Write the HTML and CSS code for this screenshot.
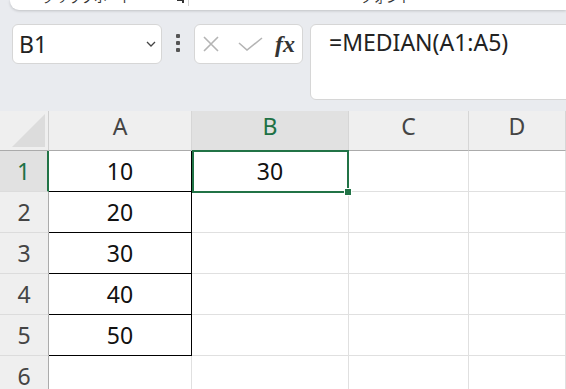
FILE: index.html
```html
<!DOCTYPE html>
<html>
<head>
    <title>MEDIAN</title>
    <meta charset="utf-8">
    <link rel="stylesheet" href="styles.css">
</head>
<body>
    <!-- ribbon, only its bottom edge is visible -->
    <div class="ribbon">
        <span class="group-label clip">クリップボード</span>
        <svg class="launcher" width="10" height="4" viewBox="0 0 10 4"><path d="M2 0 H8 V3" fill="none" stroke="#333" stroke-width="2"/></svg>
        <span class="group-sep"></span>
        <span class="group-label font">フォント</span>
    </div>

    <div class="formula-bar">
        <div class="name-box">
            <span>B1</span>
            <svg width="10" height="6" viewBox="0 0 10 6"><polyline points="1,1 5,5 9,1" fill="none" stroke="#444" stroke-width="1.3"/></svg>
        </div>
        <div class="dots"><i></i><i></i><i></i></div>
        <div class="fx-box">
            <svg class="cancel" width="16" height="16" viewBox="0 0 16 16"><path d="M1 1 L15 15 M15 1 L1 15" stroke="#b4b4b4" stroke-width="1.6"/></svg>
            <svg class="enter" width="25" height="14" viewBox="0 0 25 14"><polyline points="1,6 9,13 24,1" fill="none" stroke="#b4b4b4" stroke-width="1.6"/></svg>
            <span class="fx">fx</span>
        </div>
        <div class="formula">=MEDIAN(A1:A5)</div>
    </div>

    <div class="sheet">
        <div class="cell corner"><svg width="34" height="34" viewBox="0 0 34 34"><polygon points="33,0 33,33 0,33" fill="#dcdcdc"/></svg></div>
        <div class="cell hdr">A</div>
        <div class="cell hdr sel">B</div>
        <div class="cell hdr">C</div>
        <div class="cell hdr">D</div>

        <div class="cell row-hdr sel">1</div>
        <div class="cell boxed">10</div>
        <div class="cell active">30</div>
        <div class="cell"></div>
        <div class="cell"></div>

        <div class="cell row-hdr">2</div>
        <div class="cell boxed">20</div>
        <div class="cell"></div>
        <div class="cell"></div>
        <div class="cell"></div>

        <div class="cell row-hdr">3</div>
        <div class="cell boxed">30</div>
        <div class="cell"></div>
        <div class="cell"></div>
        <div class="cell"></div>

        <div class="cell row-hdr">4</div>
        <div class="cell boxed">40</div>
        <div class="cell"></div>
        <div class="cell"></div>
        <div class="cell"></div>

        <div class="cell row-hdr">5</div>
        <div class="cell boxed">50</div>
        <div class="cell"></div>
        <div class="cell"></div>
        <div class="cell"></div>

        <div class="cell row-hdr">6</div>
        <div class="cell"></div>
        <div class="cell"></div>
        <div class="cell"></div>
        <div class="cell"></div>
    </div>
</body>
</html>
```

FILE: styles.css
```css
body {
    margin: 0;
    height: 389px;
    overflow: hidden;
    background-color: #e9ebef;
    font-family: "Noto Sans", "Noto Sans CJK JP", sans-serif;
}

/* Ribbon (cut off at the top) */
.ribbon {
    margin-left: 10px;
    height: 10px;
    background-color: #fff;
    border-bottom-left-radius: 9px;
    box-shadow: 0 1px 3px rgba(0,0,0,0.18);
    display: flex;
    align-items: flex-start;
    overflow: hidden;
}

.group-label {
    font-family: "Noto Sans CJK JP", sans-serif;
    font-size: 13px;
    line-height: 14px;
    margin-top: -10px;
    color: #333;
}

.group-label.clip {
    margin-left: 32px;
}

.launcher {
    margin-left: 42px;
}

.group-sep {
    width: 1px;
    height: 6px;
    margin-left: 3px;
    background-color: #d0d0d0;
}

.group-label.font {
    margin-left: 171px;
}

/* Formula bar */
.formula-bar {
    display: flex;
    align-items: flex-start;
    padding: 14px 0 11px 12px;
}

.name-box,
.fx-box,
.formula {
    box-sizing: border-box;
    background-color: #fff;
    border: 1px solid #d6d6d6;
    border-radius: 6px;
}

.name-box {
    width: 150px;
    height: 40px;
    display: flex;
    align-items: center;
    justify-content: space-between;
    padding: 0 5px 0 6px;
    font-size: 23px;
    color: #222;
}

.dots {
    width: 32px;
    display: flex;
    flex-direction: column;
    align-items: center;
    gap: 3px;
    padding-top: 10px;
}

.dots i {
    width: 4px;
    height: 4px;
    border-radius: 1px;
    background-color: #555;
}

.fx-box {
    width: 109px;
    height: 40px;
    display: flex;
    align-items: center;
    padding-left: 8px;
}

.enter {
    margin-left: 19px;
}

.fx {
    font-family: "Liberation Serif", serif;
    font-style: italic;
    font-weight: bold;
    font-size: 24px;
    color: #333;
    margin-left: 12px;
}

.formula {
    flex: 1;
    height: 76px;
    margin-left: 7px;
    margin-right: -10px;
    padding: 1px 18px;
    font-size: 23px;
    color: #222;
}

/* Sheet grid */
.sheet {
    display: grid;
    grid-template-columns: 49px 143px 157px 120px 1fr;
    grid-template-rows: 40px;
    grid-auto-rows: 41px;
}

.cell {
    box-sizing: border-box;
    position: relative;
    display: flex;
    align-items: center;
    justify-content: center;
    background-color: #fff;
    border-right: 1px solid #e0e0e0;
    border-bottom: 1px solid #e0e0e0;
    font-size: 23px;
    color: #111;
}

.corner {
    background-color: #efefef;
    border-right-color: #cfcfcf;
    border-bottom-color: #ababab;
    justify-content: flex-end;
    align-items: flex-end;
    padding: 0 2px 2px 0;
}

.hdr {
    background-color: #efefef;
    color: #444;
    border-right-color: #d6d6d6;
    border-bottom-color: #ababab;
    padding-bottom: 10px;
}

.row-hdr {
    background-color: #efefef;
    color: #444;
    border-right-color: #ababab;
    border-bottom-color: #dcdcdc;
}

.hdr.sel {
    background-color: #e1e1e1;
    color: #1e7145;
    border-bottom: 1px solid #217346;
}

.row-hdr.sel {
    background-color: #e1e1e1;
    color: #1e7145;
    border-right: 2px solid #217346;
}

.boxed {
    border-right-color: #000;
    border-bottom-color: #000;
}

/* active cell: selection frame + fill handle */
.active {
    z-index: 2;
}

.active::before {
    content: '';
    position: absolute;
    top: -1px;
    left: 0;
    right: -1px;
    bottom: -2px;
    border: 2px solid #217346;
}

.active::after {
    content: '';
    position: absolute;
    right: -3px;
    bottom: -4px;
    width: 6px;
    height: 6px;
    background-color: #217346;
    box-shadow: 0 0 0 1px #fff;
}
```
